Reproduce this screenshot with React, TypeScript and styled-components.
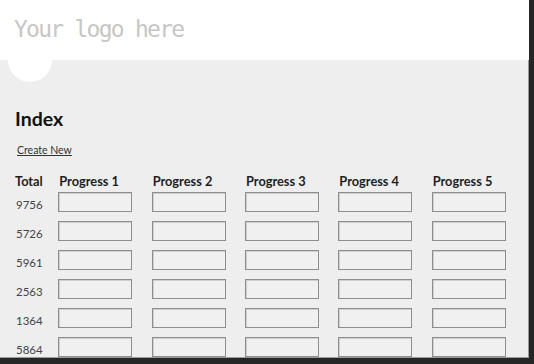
import React from "react";
import styled, { createGlobalStyle } from "styled-components";

const GlobalStyle = createGlobalStyle`
  html, body {
    margin: 0;
    padding: 0;
    background: #eeeeee;
  }
`;

const Frame = styled.div`
  position: relative;
  width: 534px;
  height: 364px;
  box-sizing: border-box;
  overflow: hidden;
  background: #eeeeee;
  border-right: 5px solid #262626;
  border-bottom: 6px solid #262626;
  box-shadow: inset -1px -1px 0 #9a9a9a;
  font-family: Lato, "Liberation Sans", sans-serif;
`;

const Header = styled.header`
  position: relative;
  height: 60px;
  background: #ffffff;
  padding: 14px 0 0 14px;
  box-sizing: border-box;
`;

const Logo = styled.div`
  font-family: "DejaVu Sans Mono", "Liberation Mono", monospace;
  font-size: 23px;
  letter-spacing: -1.75px;
  line-height: 30px;
  color: #c6c6c6;
`;

const Tab = styled.div`
  position: absolute;
  left: 8px;
  top: 38px;
  width: 44px;
  height: 44px;
  border-radius: 50%;
  background: #ffffff;
`;

const Main = styled.main`
  padding: 47px 0 0 15px;
`;

const Title = styled.h1`
  margin: 0;
  font-size: 19.5px;
  line-height: 23px;
  font-weight: 700;
  color: #111111;
`;

const CreateLink = styled.a`
  display: inline-block;
  margin: 12.5px 0 0 2px;
  font-size: 10.5px;
  line-height: 14px;
  color: #333333;
  text-decoration: underline;
  cursor: pointer;
`;

const Table = styled.div`
  display: grid;
  grid-template-columns: 43.3px repeat(5, 93.35px);
  margin-top: 15.5px;
`;

const HeadCell = styled.div<{ $first?: boolean }>`
  height: 18px;
  line-height: 18px;
  font-size: 12.8px;
  font-weight: 700;
  color: #1e1e1e;
  padding-left: ${(p) => (p.$first ? "0" : "1px")};
  white-space: nowrap;
`;

const TotalCell = styled.div`
  height: 29px;
  line-height: 29px;
  font-size: 11.5px;
  color: #444444;
  padding-left: 1px;
`;

const InputCell = styled.div`
  height: 29px;
  padding-top: 2px;
  box-sizing: border-box;
`;

const Field = styled.input`
  display: block;
  width: 74px;
  height: 20px;
  margin: 0;
  padding: 0;
  box-sizing: border-box;
  background: #f0f0f0;
  border: 1px solid #8e8e8e;
  box-shadow: inset 1px 1px 0 #cfcfcf;
  outline: none;
`;

const totals = [9756, 5726, 5961, 2563, 1364, 5864];
const progress = [1, 2, 3, 4, 5];

export default function App() {
  return (
    <>
      <GlobalStyle />
      <Frame>
        <Header>
          <Logo>Your logo here</Logo>
          <Tab />
        </Header>
        <Main>
          <Title>Index</Title>
          <CreateLink>Create New</CreateLink>
          <Table>
            <HeadCell $first>Total</HeadCell>
            {progress.map((n) => (
              <HeadCell key={n}>Progress {n}</HeadCell>
            ))}
            {totals.map((t) => (
              <React.Fragment key={t}>
                <TotalCell>{t}</TotalCell>
                {progress.map((n) => (
                  <InputCell key={n}>
                    <Field type="text" />
                  </InputCell>
                ))}
              </React.Fragment>
            ))}
          </Table>
        </Main>
      </Frame>
    </>
  );
}
